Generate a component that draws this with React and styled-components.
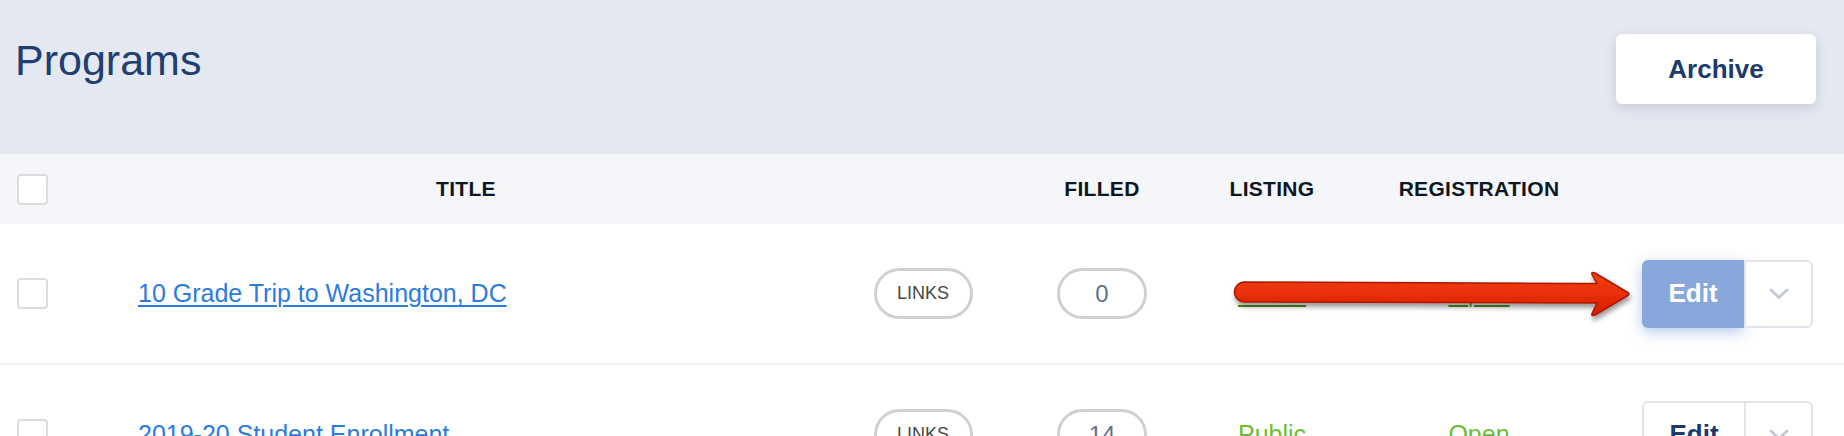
import React from "react";
import styled, { createGlobalStyle } from "styled-components";

const GlobalStyle = createGlobalStyle`
  html, body {
    margin: 0;
    padding: 0;
    background: #ffffff;
    font-family: "Liberation Sans", Arial, sans-serif;
  }
  * { box-sizing: border-box; }
`;

const Page = styled.div`
  width: 1844px;
  height: 436px;
  overflow: hidden;
  background: #ffffff;
`;

// Header band

const Header = styled.header`
  display: flex;
  justify-content: space-between;
  align-items: flex-start;
  height: 154px;
  padding: 34px 28px 0 15px;
  background: #e4e8f1;
`;

const PageTitle = styled.h1`
  margin: 2px 0 0;
  font-size: 43px;
  line-height: 48px;
  font-weight: 400;
  color: #1f3e72;
`;

const ArchiveButton = styled.button`
  width: 200px;
  height: 70px;
  border: none;
  border-radius: 6px;
  background: #ffffff;
  box-shadow: 0 4px 12px hsla(220, 20%, 30%, 0.18);
  font-family: inherit;
  font-size: 26px;
  font-weight: 700;
  color: #1d3a6c;
  cursor: pointer;
`;

// Table

const cols = "90px 752px 162px 196px 144px 270px 1fr";

const Row = styled.div`
  position: relative;
  display: grid;
  grid-template-columns: ${cols};
  align-items: center;
  height: ${(p) => (p.$head ? "70px" : "141px")};
  background: ${(p) => (p.$head ? "#f4f6fa" : "#ffffff")};
  border-bottom: ${(p) => (p.$head ? "none" : "2px solid #efefef")};
`;

const Cell = styled.div`
  display: flex;
  align-items: center;
  justify-content: ${(p) => p.$justify || "center"};
  padding-left: ${(p) => p.$pl || 0}px;
  padding-right: ${(p) => p.$pr || 0}px;
`;

const HeadText = styled.span`
  font-size: 21px;
  font-weight: 700;
  color: #0e1621;
  letter-spacing: 0.3px;
`;

const Checkbox = styled.span`
  display: block;
  width: 31px;
  height: 31px;
  border: 2px solid #dcdcdc;
  border-radius: 4px;
  background: #ffffff;
`;

const TitleLink = styled.a`
  font-size: 25px;
  color: #2b7be0;
  text-decoration: underline;
  text-underline-offset: 3px;
  text-decoration-thickness: 2px;
`;

const Pill = styled.span`
  display: flex;
  align-items: center;
  justify-content: center;
  width: ${(p) => p.$w}px;
  height: 51px;
  border: 3px solid #d0d0d0;
  border-radius: 26px;
  font-size: ${(p) => (p.$num ? "24px" : "18px")};
  color: ${(p) => (p.$num ? "#637286" : "#474747")};
`;

const StatusLink = styled.a`
  font-size: 25px;
  color: #6bbd2d;
  text-decoration: underline;
  text-decoration-color: #4f8f1f;
  text-underline-offset: 3px;
  text-decoration-thickness: 2px;
`;

const ButtonGroup = styled.div`
  display: flex;
  height: 68px;
`;

const EditButton = styled.button`
  width: 102px;
  height: 68px;
  border: ${(p) => (p.$active ? "none" : "2px solid #e1e5eb")};
  border-right: none;
  border-radius: 6px 0 0 6px;
  background: ${(p) => (p.$active ? "#88a8db" : "#ffffff")};
  box-shadow: ${(p) => (p.$active ? "0 4px 14px hsla(218, 55%, 60%, 0.45)" : "none")};
  font-family: inherit;
  font-size: 26px;
  font-weight: 700;
  color: ${(p) => (p.$active ? "#ffffff" : "#1d3a6c")};
  cursor: pointer;
`;

const MenuButton = styled.button`
  display: flex;
  align-items: center;
  justify-content: center;
  width: 69px;
  height: 68px;
  border: 2px solid #e1e5eb;
  border-radius: 0 6px 6px 0;
  background: #ffffff;
  cursor: pointer;
`;

// annotation drawn over the first row
const Arrow = styled.svg`
  position: absolute;
  left: 1220px;
  top: 40px;
  overflow: visible;
`;

const Chevron = () => (
  <svg width="20" height="12" viewBox="0 0 20 12">
    <polyline
      points="2,2 10,9.5 18,2"
      fill="none"
      stroke="#c3cad4"
      strokeWidth="3"
      strokeLinecap="round"
      strokeLinejoin="round"
    />
  </svg>
);

const RedArrow = () => (
  <Arrow width="420" height="70" viewBox="0 0 420 70">
    <defs>
      <linearGradient id="arrowFill" x1="0" y1="0" x2="0" y2="1">
        <stop offset="0" stopColor="#f4400f" />
        <stop offset="1" stopColor="#d91e00" />
      </linearGradient>
      <filter id="arrowShadow" x="-5%" y="-40%" width="110%" height="200%">
        <feDropShadow dx="1" dy="4" stdDeviation="2.5" floodColor="#000" floodOpacity="0.4" />
      </filter>
    </defs>
    <path
      d="M 24.5 18 L 377 19.5 L 372 10.5 Q 371 7.5 375 9 L 407 28 Q 411 30 407 32 L 375 51 Q 371 52.5 372 49.5 L 377 39 L 24.5 38 A 10 10 0 0 1 24.5 18 Z"
      fill="url(#arrowFill)"
      stroke="#ad1800"
      strokeWidth="1.5"
      strokeLinejoin="round"
      filter="url(#arrowShadow)"
    />
  </Arrow>
);

const programs = [
  { title: "10 Grade Trip to Washington, DC", filled: 0, listing: "Public", reg: "Open", active: true },
  { title: "2019-20 Student Enrollment", filled: 14, listing: "Public", reg: "Open" },
];

const ProgramRow = ({ program }) => (
  <Row>
    <Cell $justify="flex-start" $pl={17}>
      <Checkbox />
    </Cell>
    <Cell $justify="flex-start" $pl={48}>
      <TitleLink href="#">{program.title}</TitleLink>
    </Cell>
    <Cell>
      <Pill $w={99}>LINKS</Pill>
    </Cell>
    <Cell>
      <Pill $w={90} $num>
        {program.filled}
      </Pill>
    </Cell>
    <Cell>
      <StatusLink href="#">{program.listing}</StatusLink>
    </Cell>
    <Cell>
      <StatusLink href="#">{program.reg}</StatusLink>
    </Cell>
    <Cell $justify="flex-end" $pr={31}>
      <ButtonGroup>
        <EditButton $active={program.active}>Edit</EditButton>
        <MenuButton>
          <Chevron />
        </MenuButton>
      </ButtonGroup>
    </Cell>
    {program.active && <RedArrow />}
  </Row>
);

export default function App() {
  return (
    <Page>
      <GlobalStyle />
      <Header>
        <PageTitle>Programs</PageTitle>
        <ArchiveButton>Archive</ArchiveButton>
      </Header>
      <Row $head>
        <Cell $justify="flex-start" $pl={17}>
          <Checkbox />
        </Cell>
        <Cell>
          <HeadText>TITLE</HeadText>
        </Cell>
        <Cell />
        <Cell>
          <HeadText>FILLED</HeadText>
        </Cell>
        <Cell>
          <HeadText>LISTING</HeadText>
        </Cell>
        <Cell>
          <HeadText>REGISTRATION</HeadText>
        </Cell>
        <Cell />
      </Row>
      {programs.map((p) => (
        <ProgramRow key={p.title} program={p} />
      ))}
    </Page>
  );
}
